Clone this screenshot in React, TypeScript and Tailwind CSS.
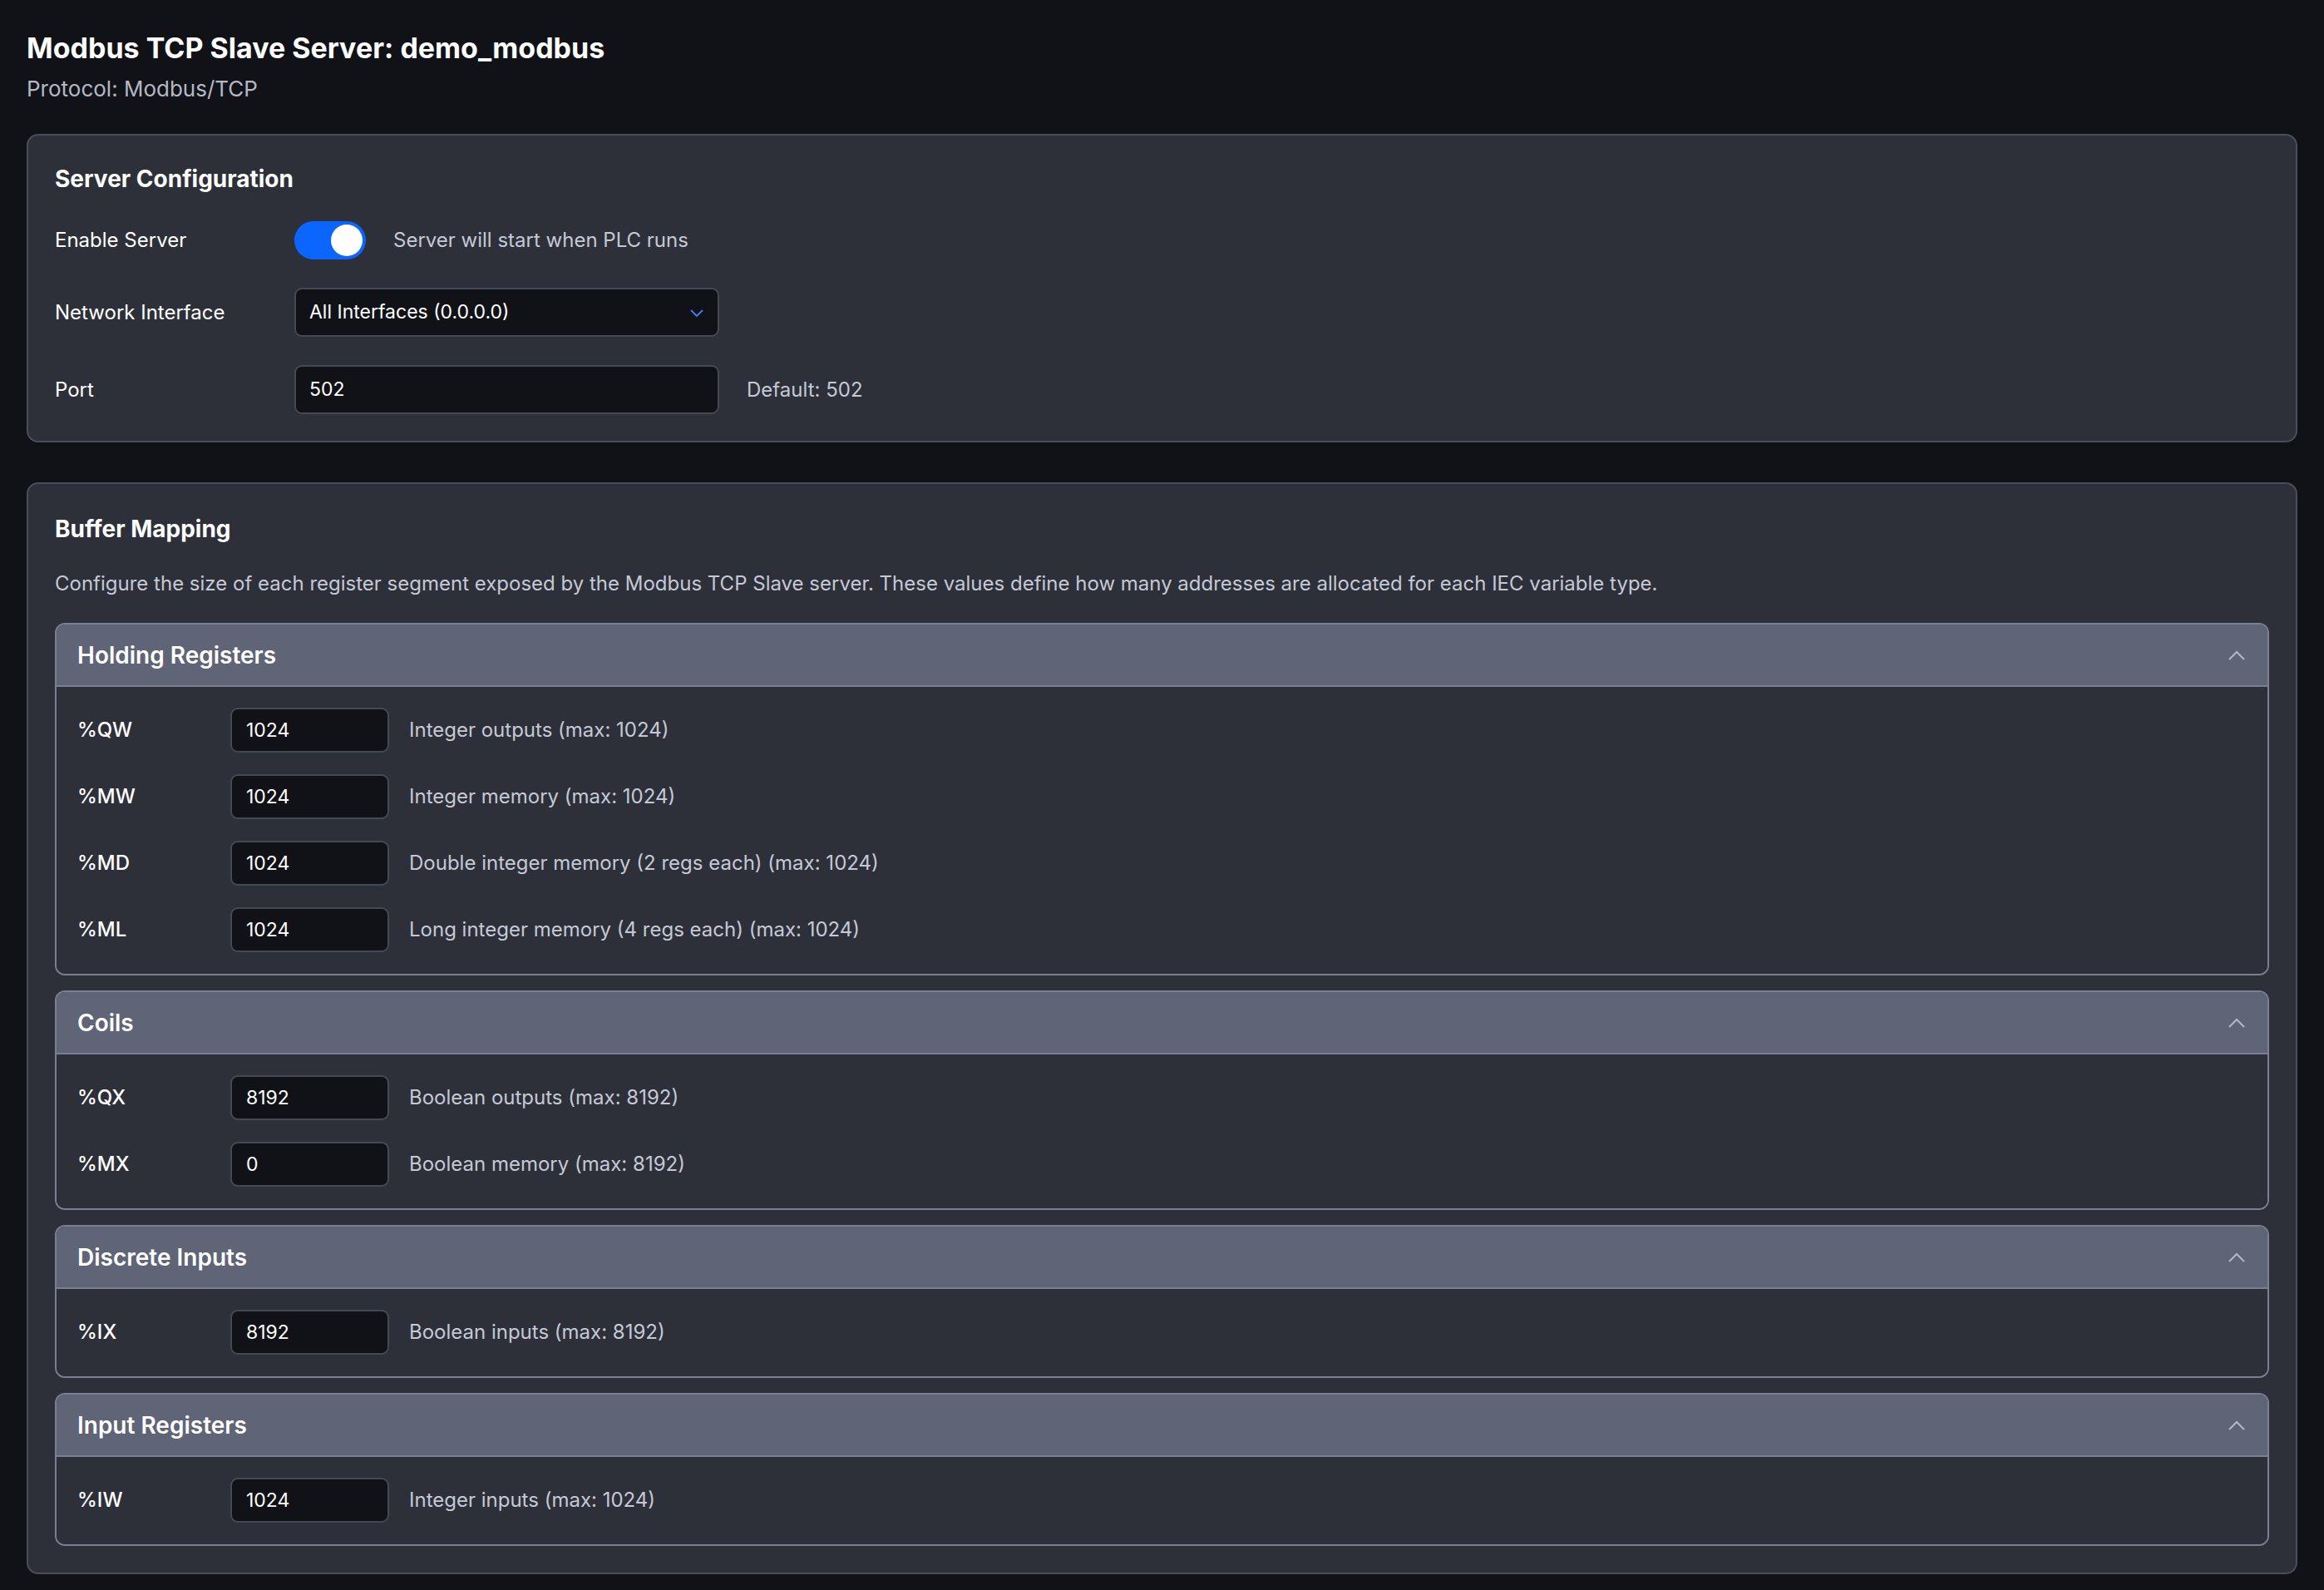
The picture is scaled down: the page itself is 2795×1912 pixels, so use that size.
import React from "react";

const Chevron = () => (
  <svg width="22" height="14" viewBox="0 0 22 14" fill="none">
    <path d="M2 12 L11 3 L20 12" stroke="#b3b8c8" strokeWidth="2" />
  </svg>
);

type Row = { k: string; v: string; d: string };

const Section = ({ title, rows }: { title: string; rows: Row[] }) => (
  <div className="rounded-[12px] border-2 border-[#7a7f92] overflow-hidden">
    <div className="h-[75px] bg-[#5f6477] border-b-2 border-[#7a7f92] flex items-center justify-between pl-[25px] pr-[26px]">
      <span className="text-[28px] font-semibold text-white">{title}</span>
      <Chevron />
    </div>
    <div className="bg-[#2d3039] flex flex-col gap-[26px] pt-[25px] pb-[26px] pl-[25px]">
      {rows.map((r) => (
        <div key={r.k} className="flex items-center h-[54px]">
          <span className="w-[184px] text-[24px] text-white font-medium">{r.k}</span>
          <div className="w-[191px] h-[54px] rounded-[9px] bg-[#111217] border-2 border-[#454955] flex items-center px-[17px] text-[23px] text-white">
            {r.v}
          </div>
          <span className="ml-[24px] text-[24px] text-[#c5c9d6]">{r.d}</span>
        </div>
      ))}
    </div>
  </div>
);

export default function App() {
  return (
    <div
      className="min-h-[1912px] w-[2795px] bg-[#111217] px-[32px] pt-[36px] pb-[33px]"
      style={{ fontFamily: "Inter, 'Noto Sans', sans-serif" }}
    >
      <h1 className="text-[34px] font-bold text-white leading-[44px]">Modbus TCP Slave Server: demo_modbus</h1>
      <p className="text-[26px] text-[#b4b8c4] mt-[9px] leading-[36px]">Protocol: Modbus/TCP</p>

      <div className="mt-[36px] rounded-[14px] border-2 border-[#4a4e5a] bg-[#2d3039] px-[32px] pt-[34px] pb-[32px]">
        <h2 className="text-[28px] font-bold text-white leading-[36px]">Server Configuration</h2>
        <div className="mt-[33px] flex flex-col gap-[34px]">
          <div className="flex items-center h-[46px]">
            <span className="w-[288px] text-[24px] text-white">Enable Server</span>
            <div className="w-[86px] h-[46px] rounded-full bg-[#0a66ff] relative">
              <div className="absolute right-[4px] top-[4px] w-[38px] h-[38px] rounded-full bg-white" />
            </div>
            <span className="ml-[33px] text-[24px] text-[#c5c9d6]">Server will start when PLC runs</span>
          </div>
          <div className="flex items-center">
            <span className="w-[288px] text-[24px] text-white">Network Interface</span>
            <div className="w-[511px] h-[59px] rounded-[9px] bg-[#111217] border-2 border-[#454955] flex items-center justify-between px-[16px] text-[23px] text-white">
              <span>All Interfaces (0.0.0.0)</span>
              <svg width="18" height="12" viewBox="0 0 18 12" fill="none">
                <path d="M2 3 L9 10 L16 3" stroke="#3b82f6" strokeWidth="1.8" />
              </svg>
            </div>
          </div>
          <div className="flex items-center">
            <span className="w-[288px] text-[24px] text-white">Port</span>
            <div className="w-[511px] h-[59px] rounded-[9px] bg-[#111217] border-2 border-[#454955] flex items-center px-[16px] text-[23px] text-white">
              502
            </div>
            <span className="ml-[33px] text-[24px] text-[#c5c9d6]">Default: 502</span>
          </div>
        </div>
      </div>

      <div className="mt-[48px] rounded-[14px] border-2 border-[#4a4e5a] bg-[#2d3039] px-[32px] pt-[36px] pb-[32px]">
        <h2 className="text-[28px] font-bold text-white leading-[36px]">Buffer Mapping</h2>
        <p className="mt-[30px] text-[24px] text-[#c5c9d6]">
          Configure the size of each register segment exposed by the Modbus TCP Slave server. These values define how many addresses are allocated for each IEC variable type.
        </p>
        <div className="mt-[29px] flex flex-col gap-[18px]">
          <Section
            title="Holding Registers"
            rows={[
              { k: "%QW", v: "1024", d: "Integer outputs (max: 1024)" },
              { k: "%MW", v: "1024", d: "Integer memory (max: 1024)" },
              { k: "%MD", v: "1024", d: "Double integer memory (2 regs each) (max: 1024)" },
              { k: "%ML", v: "1024", d: "Long integer memory (4 regs each) (max: 1024)" },
            ]}
          />
          <Section
            title="Coils"
            rows={[
              { k: "%QX", v: "8192", d: "Boolean outputs (max: 8192)" },
              { k: "%MX", v: "0", d: "Boolean memory (max: 8192)" },
            ]}
          />
          <Section title="Discrete Inputs" rows={[{ k: "%IX", v: "8192", d: "Boolean inputs (max: 8192)" }]} />
          <Section title="Input Registers" rows={[{ k: "%IW", v: "1024", d: "Integer inputs (max: 1024)" }]} />
        </div>
      </div>
    </div>
  );
}
